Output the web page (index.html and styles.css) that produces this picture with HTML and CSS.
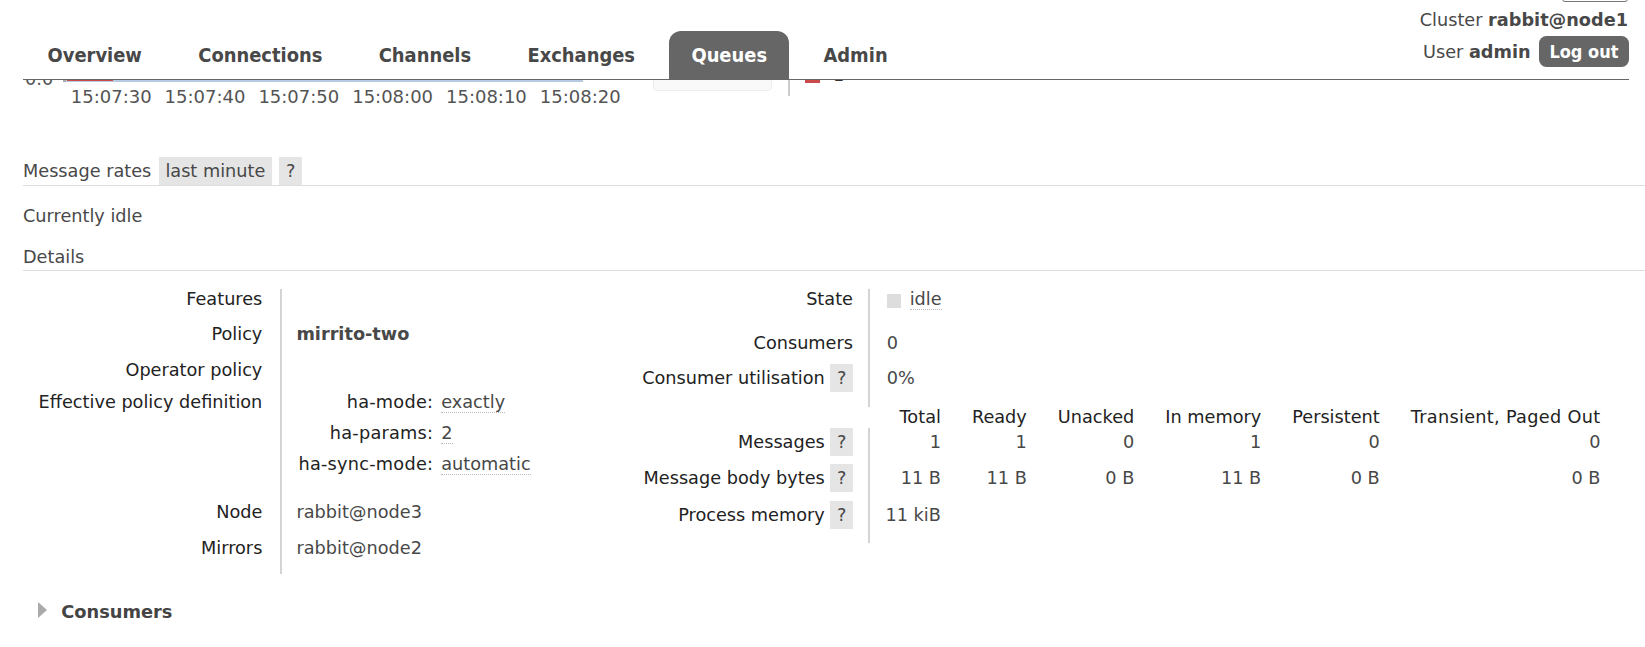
FILE: index.html
```html
<!DOCTYPE html>
<html>
<head>
<meta charset="utf-8">
<title>Queue</title>
<link rel="stylesheet" href="styles.css">
</head>
<body>
<div class="header">
  <div class="header-inner">
    <ul class="menu">
      <li><a>Overview</a></li>
      <li><a>Connections</a></li>
      <li><a>Channels</a></li>
      <li><a>Exchanges</a></li>
      <li><a class="selected">Queues</a></li>
      <li><a>Admin</a></li>
    </ul>
    <ul class="topnav">
      <li class="vhost"><span class="select"></span></li>
      <li class="cluster">Cluster <b>rabbit@node1</b></li>
      <li class="user"><span>User <b>admin</b></span><button class="logout">Log out</button></li>
    </ul>
  </div>
</div>

<div class="main">
  <div class="chart">
    <span class="ylabel">0.0</span>
    <div class="plot"><span class="plot-red"></span></div>
    <div class="xlabels">
      <span>15:07:30</span><span>15:07:40</span><span>15:07:50</span><span>15:08:00</span><span>15:08:10</span><span>15:08:20</span>
    </div>
    <div class="legend-btn"><span>Total</span></div>
    <div class="legend-sep"></div>
    <span class="legend-swatch"></span>
    <span class="legend-val">1</span>
  </div>

  <div class="section-head">
    <span>Message rates</span>
    <span class="pill">last minute</span>
    <span class="pill">?</span>
  </div>

  <p class="idle-line">Currently idle</p>

  <div class="details-head">Details</div>

  <div class="details">
    <table class="facts facts-l">
      <tbody>
        <tr><th>Features</th><td></td></tr>
        <tr><th>Policy</th><td><b>mirrito-two</b></td></tr>
        <tr><th>Operator policy</th><td></td></tr>
        <tr><th>Effective policy definition</th>
          <td>
            <table class="defs">
              <tbody>
                <tr><th>ha-mode:</th><td><abbr class="abbr">exactly</abbr></td></tr>
                <tr><th>ha-params:</th><td><abbr class="abbr">2</abbr></td></tr>
                <tr><th>ha-sync-mode:</th><td><abbr class="abbr">automatic</abbr></td></tr>
              </tbody>
            </table>
          </td>
        </tr>
        <tr><th>Node</th><td>rabbit@node3</td></tr>
        <tr><th>Mirrors</th><td>rabbit@node2</td></tr>
      </tbody>
    </table>

    <div class="right-block">
      <table class="facts facts-r">
        <tbody>
          <tr class="r-state"><th>State</th><td><span class="status"></span><abbr class="abbr">idle</abbr></td></tr>
          <tr class="r-cons"><th>Consumers</th><td>0</td></tr>
          <tr class="r-util"><th>Consumer utilisation <span class="help">?</span></th><td>0%</td></tr>
        </tbody>
      </table>
      <table class="facts facts-m">
        <tbody>
          <tr class="m-head"><th></th><th class="col">Total</th><th class="col">Ready</th><th class="col">Unacked</th><th class="col">In memory</th><th class="col">Persistent</th><th class="col col-wide">Transient, Paged Out</th></tr>
          <tr class="m-msg"><th>Messages <span class="help">?</span></th><td class="first">1</td><td>1</td><td>0</td><td>1</td><td>0</td><td>0</td></tr>
          <tr class="m-bytes"><th>Message body bytes <span class="help">?</span></th><td class="first">11 B</td><td>11 B</td><td>0 B</td><td>11 B</td><td>0 B</td><td>0 B</td></tr>
          <tr class="m-mem"><th>Process memory <span class="help">?</span></th><td class="first">11 kiB</td><td></td><td></td><td></td><td></td><td></td></tr>
        </tbody>
      </table>
    </div>
  </div>

  <h2 class="consumers"><span class="tri"></span>Consumers</h2>
</div>
</body>
</html>
```
FILE: styles.css
```css
* { box-sizing: border-box; }

body {
  margin: 0;
  font-family: "DejaVu Sans", Verdana, sans-serif;
  font-size: 17.7px;
  line-height: 20.6px;
  color: #484848;
  background: #fff;
}

/* ---------- header ---------- */
.header {
  position: fixed;
  top: 0;
  left: 0;
  right: 0;
  background: #fff;
  z-index: 10;
}
.header-inner {
  margin: 0 16px 0 23px;
  height: 80px;
  border-bottom: 1px solid #666;
  display: flex;
  justify-content: space-between;
  align-items: flex-start;
}
.menu {
  list-style: none;
  margin: 31px 0 0;
  padding: 0 0 0 2.6px;
  display: flex;
}
.menu a {
  display: block;
  height: 48px;
  line-height: 49.5px;
  padding: 0 22px;
  margin-right: 12.4px;
  font-family: "DejaVu Sans Condensed", "DejaVu Sans", sans-serif;
  font-stretch: condensed;
  font-weight: bold;
  font-size: 19.9px;
  color: #484848;
  border-radius: 12px 12px 0 0;
}
.menu a.selected {
  background: #666;
  color: #fff;
}
.topnav {
  list-style: none;
  margin: -26px 0 0;
  padding: 0;
  display: flex;
  flex-direction: column;
  align-items: flex-end;
}
.select {
  display: block;
  width: 66px;
  height: 28px;
  border: 1px solid #767676;
  border-radius: 3px;
  margin-right: 1px;
}
.cluster {
  margin-top: 8.3px;
  margin-right: 1px;
}
.user {
  margin-top: 5.1px;
  display: flex;
  align-items: baseline;
  gap: 8.3px;
}
.logout {
  border: 0;
  margin: 0;
  background: #666;
  color: #fff;
  border-radius: 7.5px;
  font-family: "DejaVu Sans Condensed", "DejaVu Sans", sans-serif;
  font-stretch: condensed;
  font-weight: bold;
  font-size: 18px;
  line-height: 24px;
  height: 31px;
  padding: 4.5px 10.5px 2.5px;
}

/* ---------- main ---------- */
.main {
  padding-left: 23px;
}

/* plot canvas */
.chart {
  position: relative;
  height: 120px;
  color: #545454;
}
.ylabel {
  position: absolute;
  left: 2px;
  top: 68.6px;
}
.plot {
  position: absolute;
  left: 40px;
  top: 79px;
  width: 520px;
  height: 3px;
  background: #b7cbe2;
  border-left: 3px solid #aaa;
}
.plot-red {
  position: absolute;
  left: 1px;
  top: 0;
  width: 46px;
  height: 2px;
  background: #cb4b4b;
}
.xlabels {
  position: absolute;
  left: 47.8px;
  top: 87.3px;
  display: flex;
  font-size: 18px;
}
.xlabels span {
  width: 93.8px;
  flex: none;
}
.legend-btn {
  position: absolute;
  left: 630px;
  top: 30px;
  width: 119px;
  height: 60.7px;
  background: #f9f9f9;
  border: 1px solid #eee;
  border-radius: 4px;
  display: flex;
  justify-content: flex-end;
  align-items: flex-end;
  padding: 0 7px 5px;
  font-size: 15px;
  color: #333;
}
.legend-sep {
  position: absolute;
  left: 765px;
  top: 0;
  width: 2px;
  height: 96px;
  background: #ccc;
}
.legend-swatch {
  position: absolute;
  left: 782px;
  top: 67.7px;
  width: 15px;
  height: 15px;
  background: #cb4b4b;
}
.legend-val {
  position: absolute;
  left: 810px;
  top: 64.6px;
  color: #333;
}

/* section heads */
.section-head {
  display: flex;
  align-items: baseline;
  border-bottom: 1px solid #ddd;
  margin-top: 36.7px;
}
.pill {
  background: #e5e5e5;
  padding: 4px 6.6px 3.4px;
  margin-left: 7.5px;
}
.idle-line {
  margin: 20px 0 0;
}
.details-head {
  margin-top: 20.4px;
  padding-bottom: 2.4px;
  border-bottom: 1px solid #ddd;
}

/* details */
.details {
  display: grid;
  grid-template-columns: 602.7px auto;
  align-items: start;
  justify-items: start;
  margin-top: 18.7px;
}
table {
  border-collapse: collapse;
  border-spacing: 0;
}
th, td {
  box-sizing: content-box;
  padding: 0;
  vertical-align: baseline;
  text-align: left;
  font-weight: normal;
  white-space: nowrap;
}
.facts > tbody > tr > th {
  text-align: right;
  color: #222;
  padding: 0 17.4px 14px 15.6px;
}
.facts > tbody > tr > td {
  border-left: 2px solid #d4d4d4;
  padding: 0 15px 14px 14.7px;
}
.facts-l > tbody > tr:nth-child(1) > * { padding-bottom: 13.6px; }
.facts-l > tbody > tr:nth-child(2) > * { padding-bottom: 16.1px; }
.facts-l > tbody > tr:nth-child(3) > * { padding-bottom: 11.7px; }
.facts-l > tbody > tr:nth-child(4) > * { padding-bottom: 17.2px; }
.facts-l > tbody > tr:nth-child(5) > * { padding-bottom: 15.5px; }
.facts-l > tbody > tr:nth-child(6) > * { padding-bottom: 15.5px; }

.defs th {
  text-align: right;
  color: #222;
  letter-spacing: 0.25px;
  padding: 0 8px 10.2px 2px;
}
.defs td {
  padding: 0 0 10.2px;
}
.abbr {
  text-decoration: none;
  border-bottom: 1px dotted #bbb;
}

.right-block {
  display: flex;
  flex-direction: column;
  align-items: flex-start;
}
.facts-r > tbody > tr > th,
.facts-m > tbody > tr > th {
  width: 211.7px;
  padding-left: 15.6px;
  padding-right: 15px;
}
.facts-r > tbody > tr > td {
  padding-left: 16.7px;
}
.r-state > * { padding-bottom: 22.7px !important; }
.r-cons > * { padding-bottom: 10.8px !important; }
.r-util > * { padding-bottom: 15.3px !important; }

.status {
  display: inline-block;
  width: 14.4px;
  height: 14.4px;
  background: #ddd;
  vertical-align: -2.7px;
  margin-right: 8.6px;
}
.help {
  display: inline-block;
  background: #e5e5e5;
  color: #484848;
  padding: 4px 6.6px 3.4px;
}

.facts-m > tbody > tr > td {
  border-left: 0;
  text-align: right;
  padding: 0 15.5px;
}
.facts-m > tbody > tr > td.first {
  border-left: 2px solid #d4d4d4;
}
.facts-m > tbody > tr > th.col {
  width: auto;
  text-align: right;
  padding: 0 15.5px;
}
.facts-m > tbody > tr > th.col-wide {
  letter-spacing: 0.3px;
}
.m-head > * { padding-bottom: 0 !important; }
.m-msg > * { padding-bottom: 8.6px !important; }
.m-bytes > * { padding-bottom: 8.9px !important; }
.m-mem > * { padding-bottom: 13.7px !important; }

/* consumers */
.consumers {
  display: flex;
  align-items: flex-start;
  margin: 27.5px 0 0;
  padding-left: 15.3px;
  font-size: 17.8px;
  line-height: 20.7px;
  font-weight: bold;
  color: #444;
}
.tri {
  width: 0;
  height: 0;
  border-left: 9.4px solid #aaa;
  border-top: 8.35px solid transparent;
  border-bottom: 8.35px solid transparent;
  margin-right: 14px;
}
```
